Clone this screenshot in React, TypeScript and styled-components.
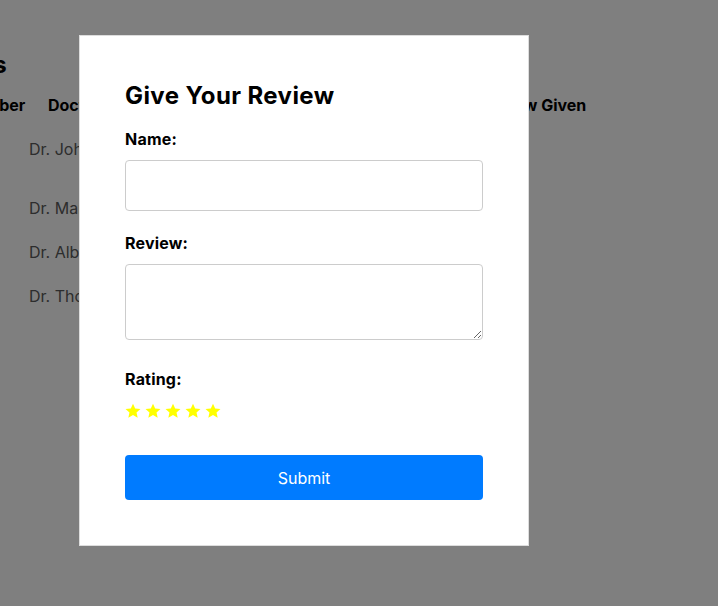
import React from 'react';
import styled, { createGlobalStyle } from 'styled-components';

const GlobalStyle = createGlobalStyle`
  html, body {
    margin: 0;
    padding: 0;
    background: #ffffff;
    overflow: hidden;
  }
  body {
    font-family: Inter, 'Open Sans', 'Liberation Sans', sans-serif;
    color: #000;
  }
  * {
    box-sizing: border-box;
  }
`;

interface IDoctorRow {
  id: number;
  name: string;
  given: boolean;
}

const rows: IDoctorRow[] = [
  { id: 1, name: 'Dr. John Smith', given: false },
  { id: 2, name: 'Dr. Mary Johnson', given: true },
  { id: 3, name: 'Dr. Albert Brown', given: true },
  { id: 4, name: 'Dr. Thomas Lee', given: true }
];

// page behind the modal, scrolled a bit to the right
const Page = styled.div`
  width: 760px;
  margin-left: -138px;
  padding-top: 49px;
  height: 600px;
`;

const PageTitle = styled.h2`
  margin: 0 0 2px;
  padding-left: 4px;
  font-size: 24px;
  line-height: 32px;
  font-weight: 700;
`;

const Table = styled.table`
  border-collapse: collapse;
  table-layout: fixed;
  margin-left: 28px;
  width: 717px;
`;

const HeadCell = styled.th<{ width: number }>`
  width: ${(props: { width: number }) => props.width}px;
  padding: 10px 0 10px 24px;
  font-size: 16px;
  line-height: 24px;
  font-weight: 700;
  text-align: left;
  white-space: nowrap;
`;

const Cell = styled.td`
  padding: 10px 5px;
  font-size: 16px;
  line-height: 24px;
  color: #5a5a5a;
  vertical-align: top;
  text-align: left;
  white-space: nowrap;
`;

const SmallButton = styled.button`
  height: 39px;
  padding: 0 14px;
  border: none;
  border-radius: 4px;
  background: #007bff;
  color: #fff;
  font: inherit;
`;

const Overlay = styled.div`
  position: fixed;
  inset: 0;
  background: rgba(0, 0, 0, 0.5);
  display: flex;
  align-items: flex-start;
  padding: 35px 0 0 79px;
`;

const Modal = styled.div`
  width: 450px;
  height: 511px;
  background: #ffffff;
  border: 1px solid #dddddd;
  padding: 44px 45px 45px 45px;
  display: flex;
  flex-direction: column;
`;

const Title = styled.h2`
  margin: 0 0 15px;
  font-size: 24px;
  line-height: 32px;
  font-weight: 700;
  letter-spacing: 0.4px;
`;

const Label = styled.label<{ gap?: number }>`
  display: block;
  font-size: 16px;
  line-height: 24px;
  font-weight: 700;
  letter-spacing: 0.2px;
  margin-bottom: ${(props: { gap?: number }) => props.gap ?? 9}px;
`;

const TextInput = styled.input`
  display: block;
  width: 100%;
  height: 51px;
  border: 1px solid #cccccc;
  border-radius: 4px;
  padding: 10px;
  font: inherit;
  margin-bottom: 20px;
`;

const TextArea = styled.textarea`
  display: block;
  width: 100%;
  height: 76px;
  border: 1px solid #cccccc;
  border-radius: 4px;
  padding: 10px;
  font: inherit;
  margin-bottom: 27px;
`;

const Stars = styled.div`
  display: flex;
  gap: 4px;
  height: 16px;
  align-items: center;
  margin-bottom: 36px;
`;

const SubmitButton = styled.button`
  width: 100%;
  height: 45px;
  border: none;
  border-radius: 4px;
  background: #007bff;
  color: #ffffff;
  font-family: inherit;
  font-size: 16px;
  cursor: pointer;
`;

const Star = () => (
  <svg width="16" height="16" viewBox="0 0 24 24">
    <path
      d="M12 1l3.3 7.2 7.9.8-5.9 5.3 1.7 7.8L12 18.1l-7 4 1.7-7.8L.8 9l7.9-.8z"
      fill="#ffff00"
    />
  </svg>
);

const columns = [
  { title: 'Serial Number', width: 134 },
  { title: 'Doctor Name', width: 170 },
  { title: 'Action', width: 263 },
  { title: 'Review Given', width: 150 }
];

export default function App() {
  return (
    <>
      <GlobalStyle />
      <Page>
        <PageTitle>My Reviews</PageTitle>
        <Table>
          <thead>
            <tr>
              {columns.map((c) => (
                <HeadCell key={c.title} width={c.width}>
                  {c.title}
                </HeadCell>
              ))}
            </tr>
          </thead>
          <tbody>
            {rows.map((r) => (
              <tr key={r.id}>
                <Cell>{r.id}</Cell>
                <Cell>{r.name}</Cell>
                <Cell>{r.given ? '' : <SmallButton>Give Review</SmallButton>}</Cell>
                <Cell>{r.given ? 'Yes' : 'No'}</Cell>
              </tr>
            ))}
          </tbody>
        </Table>
      </Page>
      <Overlay>
        <Modal>
          <Title>Give Your Review</Title>
          <Label htmlFor="name">Name:</Label>
          <TextInput id="name" type="text" />
          <Label htmlFor="review">Review:</Label>
          <TextArea id="review" />
          <Label gap={12}>Rating:</Label>
          <Stars>
            {[1, 2, 3, 4, 5].map((n) => (
              <Star key={n} />
            ))}
          </Stars>
          <SubmitButton>Submit</SubmitButton>
        </Modal>
      </Overlay>
    </>
  );
}
